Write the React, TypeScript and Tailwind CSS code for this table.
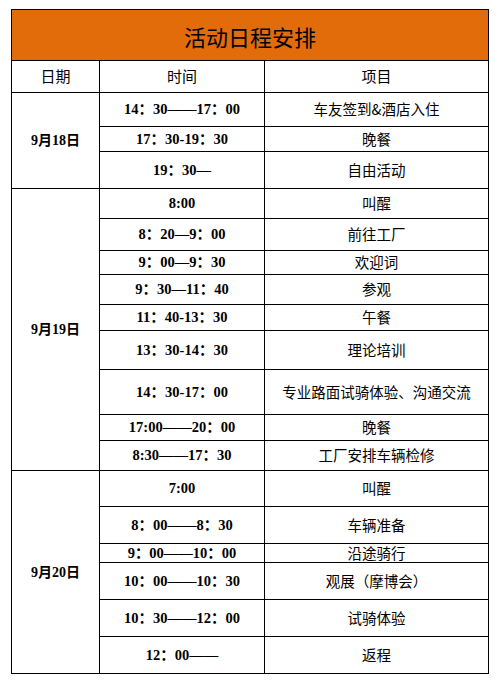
const serif = "font-['Liberation_Serif','Noto_Sans_CJK_SC',serif] font-bold";
const sans = "font-['Noto_Sans_CJK_SC',sans-serif]";

type Item = { time: string; task: string; h: string };

const days: { date: string; span: string; items: Item[] }[] = [
  {
    date: "9月18日",
    span: "row-span-3",
    items: [
      { time: "14：30——17：00", task: "车友签到&酒店入住", h: "h-[34px]" },
      { time: "17：30-19：30", task: "晚餐", h: "h-[25px]" },
      { time: "19：30—", task: "自由活动", h: "h-[37px]" },
    ],
  },
  {
    date: "9月19日",
    span: "row-span-9",
    items: [
      { time: "8:00", task: "叫醒", h: "h-[30px]" },
      { time: "8：20—9：00", task: "前往工厂", h: "h-[32px]" },
      { time: "9：00—9：30", task: "欢迎词", h: "h-[24px]" },
      { time: "9：30—11：40", task: "参观", h: "h-[30px]" },
      { time: "11：40-13：30", task: "午餐", h: "h-[26px]" },
      { time: "13：30-14：30", task: "理论培训", h: "h-[39px]" },
      { time: "14：30-17：00", task: "专业路面试骑体验、沟通交流", h: "h-[45px]" },
      { time: "17:00——20：00", task: "晚餐", h: "h-[26px]" },
      { time: "8:30——17：30", task: "工厂安排车辆检修", h: "h-[30px]" },
    ],
  },
  {
    date: "9月20日",
    span: "row-span-6",
    items: [
      { time: "7:00", task: "叫醒", h: "h-[36px]" },
      { time: "8：00——8：30", task: "车辆准备", h: "h-[37px]" },
      { time: "9：00——10：00", task: "沿途骑行", h: "h-[19px]" },
      { time: "10：00——10：30", task: "观展（摩博会）", h: "h-[37px]" },
      { time: "10：30——12：00", task: "试骑体验", h: "h-[37px]" },
      { time: "12：00——", task: "返程", h: "h-[36px]" },
    ],
  },
];

export default function App() {
  return (
    <div className="min-h-[691px] w-[500px] bg-white pt-[9px] text-black">
      <div className="ml-[11px] w-[478px] border border-black">
        <div
          className={`flex h-[51px] items-center justify-center border-b border-black bg-[#e36c0a] pt-[3px] text-[22px] ${sans}`}
        >
          活动日程安排
        </div>

        <div className="grid grid-cols-[88px_165px_1fr]">
          <div className={`flex h-[32px] items-center justify-center border-b border-r border-black text-[15px] ${sans}`}>
            日期
          </div>
          <div className={`flex h-[32px] items-center justify-center border-b border-r border-black text-[15px] ${sans}`}>
            时间
          </div>
          <div className={`flex h-[32px] items-center justify-center border-b border-black text-[15px] ${sans}`}>
            项目
          </div>

          {days.map((d, di) => (
            <div key={d.date} className="contents">
              <div
                className={`${d.span} flex items-center justify-center border-r border-black text-[14px] ${serif} ${
                  di < days.length - 1 ? "border-b" : ""
                }`}
              >
                {d.date}
              </div>
              {d.items.map((it, ii) => {
                const last = di === days.length - 1 && ii === d.items.length - 1;
                return (
                  <div key={it.time + it.task} className="contents">
                    <div
                      className={`${it.h} flex items-center justify-center border-r border-black text-[14.5px] leading-none ${serif} ${
                        last ? "" : "border-b"
                      }`}
                    >
                      {it.time}
                    </div>
                    <div
                      className={`${it.h} flex items-center justify-center border-black text-[14.5px] leading-none ${sans} ${
                        last ? "" : "border-b"
                      }`}
                    >
                      {it.task}
                    </div>
                  </div>
                );
              })}
            </div>
          ))}
        </div>
      </div>
    </div>
  );
}
